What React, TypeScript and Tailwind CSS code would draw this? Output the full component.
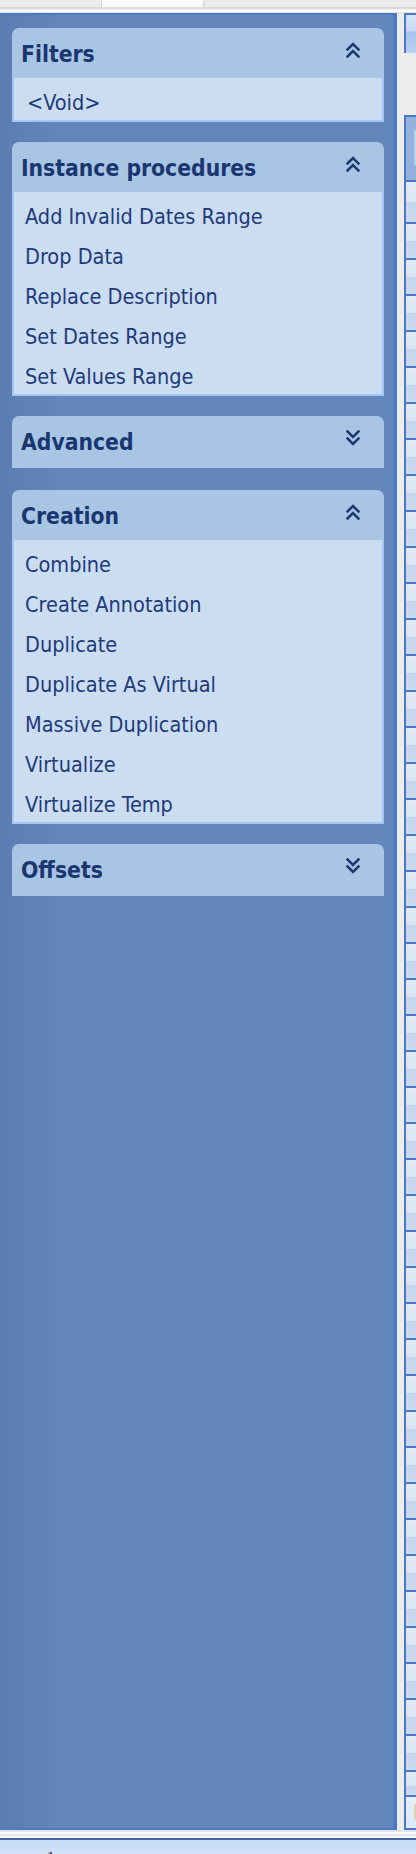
import React from 'react';

const FONT = { fontFamily: "'DejaVu Sans Condensed', 'DejaVu Sans', sans-serif" };

function Chevron({ up }: { up: boolean }) {
  return (
    <svg width="14" height="16" viewBox="0 0 14 16" className="mt-[14px] shrink-0" fill="none" stroke="#1d3a6e" strokeWidth="2.6" strokeLinecap="square" strokeLinejoin="miter">
      {up ? (
        <>
          <path d="M1.5 7.5 L7 2 L12.5 7.5" />
          <path d="M1.5 14.5 L7 9 L12.5 14.5" />
        </>
      ) : (
        <>
          <path d="M1.5 1.5 L7 7 L12.5 1.5" />
          <path d="M1.5 8.5 L7 14 L12.5 8.5" />
        </>
      )}
    </svg>
  );
}

function Card({ title, items, open, className }: { title: string; items?: string[]; open: boolean; className?: string }) {
  return (
    <div className={`w-[372px] ${className ?? ''}`}>
      <div className="h-[50px] rounded-t-[7px] bg-[#a9c5e4] flex justify-between pl-[9px] pr-[24px]">
        <span className="pt-[3px] leading-[47px] text-[22.7px] font-bold text-[#1a3670] whitespace-nowrap">{title}</span>
        <Chevron up={open} />
      </div>
      {open ? (
        <div className="bg-[#cbddf0] border-x-2 border-b-2 border-[#a3c6f4] pt-[2px]">
          {items!.map((it) => (
            <div key={it} className="h-[40px] pt-[6px] leading-[34px] pl-[11px] text-[21.5px] text-[#1f3a7a] whitespace-nowrap">
              {it}
            </div>
          ))}
        </div>
      ) : (
        <div className="h-[2px] bg-[#a9c5e4]" />
      )}
    </div>
  );
}

const proc = ['Add Invalid Dates Range', 'Drop Data', 'Replace Description', 'Set Dates Range', 'Set Values Range'];
const creation = ['Combine', 'Create Annotation', 'Duplicate', 'Duplicate As Virtual', 'Massive Duplication', 'Virtualize', 'Virtualize Temp'];

const rows = Array.from({ length: 43 }, (_, i) => i);

export default function App() {
  return (
    <div className="w-[416px] h-[1854px] flex flex-col bg-[#ececec] overflow-hidden" style={FONT}>
      {/* top bar */}
      <div className="h-[13px] flex flex-col shrink-0">
        <div className="h-[7px] flex bg-[#ebebeb]">
          <div className="w-[102px] border-r border-[#d4d4d4]" />
          <div className="w-[103px] bg-[#fafafa] border-r-2 border-[#dedede]" />
          <div className="flex-1" />
        </div>
        <div className="h-[2px] bg-[#dadada]" />
        <div className="h-[1px] bg-[#f0f0f0]" />
        <div className="h-[2px] bg-[#fbfbfb]" />
        <div className="h-[1px] bg-[#e4e4e4]" />
      </div>

      {/* middle */}
      <div className="h-[1817px] flex shrink-0">
        <div className="w-[397px] border-t-2 border-r-4 border-b-2 border-[#4b79c6] bg-[linear-gradient(to_right,#5b7cb0,#6387ba_60px)] pt-[13px] pl-[12px] flex flex-col">
          <div className="w-[372px]">
            <div className="h-[50px] rounded-t-[7px] bg-[#a9c5e4] flex justify-between pl-[9px] pr-[24px]">
              <span className="pt-[3px] leading-[47px] text-[22.7px] font-bold text-[#1a3670]">Filters</span>
              <Chevron up={true} />
            </div>
            <div className="bg-[#cbddf0] border-x-2 border-b-2 border-[#a3c6f4] pt-[2px]">
              <div className="h-[40px] pt-[6px] leading-[34px] pl-[13px] text-[21.5px] text-[#1f3a7a]">&lt;Void&gt;</div>
            </div>
          </div>
          <Card title="Instance procedures" items={proc} open className="mt-[20px]" />
          <Card title="Advanced" open={false} className="mt-[20px]" />
          <Card title="Creation" items={creation} open className="mt-[22px]" />
          <Card title="Offsets" open={false} className="mt-[20px]" />
        </div>
        <div className="w-[7px] bg-[#ececec]" />
        <div className="flex-1 flex flex-col">
          <div className="h-[40px] border-t-2 border-l-2 border-[#4b79c6] bg-[linear-gradient(#d3e3f8_0,#c9dbf6_40%,#a7c3ec_45%,#b9d1f2_100%)]" />
          <div className="h-[62px]" />
          <div className="flex-1 flex flex-col border-t-2 border-l-2 border-b-2 border-[#4b79c6]">
            <div className="h-[63px] bg-[#93b2dd] flex justify-end pt-[13px]">
              <div className="w-[2px] h-[35px] bg-[#bcd0ec]" />
            </div>
            <div className="h-[42px] border-t-2 border-[#4b79c6] bg-[linear-gradient(#e1eaf6_0,#dbe5f3_50%,#c5d5ec_50%,#cbdaf0_100%)]" />
            {rows.map((r) => (
              <div key={r} className="h-[36px] border-t-2 border-[#4b79c6] bg-[linear-gradient(#e1eaf6_0,#dbe5f3_50%,#c5d5ec_50%,#cbdaf0_100%)]" />
            ))}
            <div className="h-[25px] border-t-2 border-[#4b79c6] bg-[linear-gradient(#e1eaf6_0,#dbe5f3_60%,#c5d5ec_60%,#cbdaf0_100%)]" />
            <div className="flex-1 border-t-2 border-[#4b79c6] bg-[linear-gradient(#e3edfb_0,#dde9fa_100%)] flex justify-end pt-[7px]">
              <div className="w-[2px] h-[16px] bg-[#e2cfb6]" />
            </div>
          </div>
        </div>
      </div>

      {/* bottom */}
      <div className="h-[2px] bg-[#e5e5e5] shrink-0" />
      <div className="h-[2px] bg-[#fafafa] shrink-0" />
      <div className="h-[2px] bg-[#e8e8e8] shrink-0" />
      <div className="h-[2px] bg-[#f5f5f5] shrink-0" />
      <div className="h-[2px] bg-[#4565a5] shrink-0" />
      <div className="flex-1 bg-[linear-gradient(#c6dbf6,#d0e2f8)] relative">
        <div className="absolute left-[48px] top-[12px] w-[2px] h-[2px] bg-[#c9a77a]" />
        <div className="absolute left-[50px] top-[12px] w-[2px] h-[2px] bg-[#2a55c0]" />
      </div>
    </div>
  );
}
